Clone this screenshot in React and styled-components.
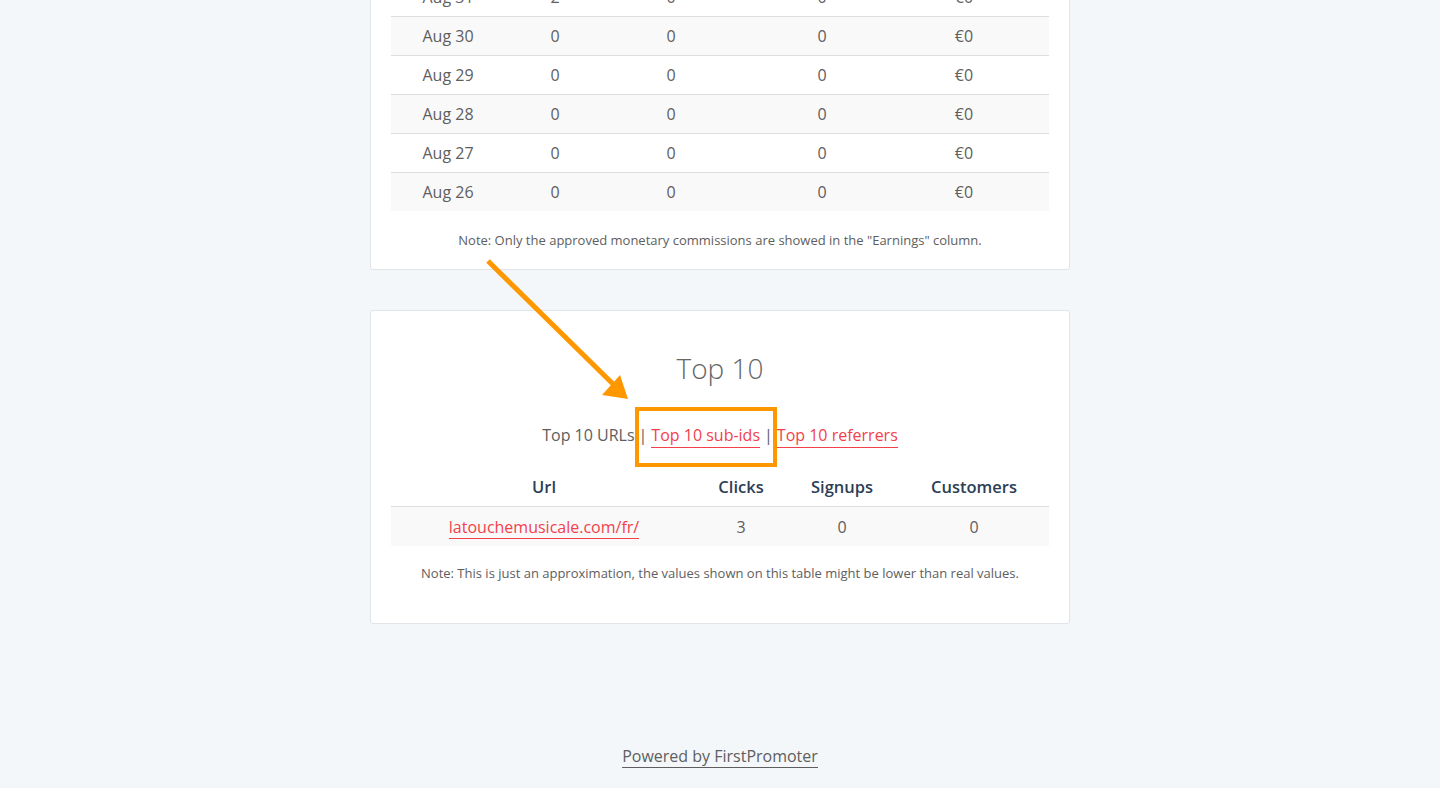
import React from "react";
import styled, { createGlobalStyle } from "styled-components";

const stats = [
  { date: "Aug 31", clicks: 2, signups: 0, customers: 0, earnings: "€0" },
  { date: "Aug 30", clicks: 0, signups: 0, customers: 0, earnings: "€0" },
  { date: "Aug 29", clicks: 0, signups: 0, customers: 0, earnings: "€0" },
  { date: "Aug 28", clicks: 0, signups: 0, customers: 0, earnings: "€0" },
  { date: "Aug 27", clicks: 0, signups: 0, customers: 0, earnings: "€0" },
  { date: "Aug 26", clicks: 0, signups: 0, customers: 0, earnings: "€0" },
];

const topUrls = [
  { url: "latouchemusicale.com/fr/", clicks: 3, signups: 0, customers: 0 },
];

const App = () => {
  return (
    <Page>
      <GlobalStyle />
      <Column>
        {/* page is scrolled, so the stats card starts above the viewport */}
        <Card $offset="-44px" $bottom="20px">
          <StatsTable>
            {stats.map((row, i) => (
              <StatsRow key={row.date} $striped={i % 2 === 1}>
                <Cell>{row.date}</Cell>
                <Cell>{row.clicks}</Cell>
                <Cell>{row.signups}</Cell>
                <Cell>{row.customers}</Cell>
                <Cell>{row.earnings}</Cell>
              </StatsRow>
            ))}
          </StatsTable>
          <Note $top="20px">
            Note: Only the approved monetary commissions are showed in the
            "Earnings" column.
          </Note>
        </Card>

        <Card $offset="40px" $bottom="41px">
          <Title>Top 10</Title>
          <Tabs>
            <span>Top 10 URLs</span>
            <Sep>|</Sep>
            <TabLink href="#">Top 10 sub-ids</TabLink>
            <Sep>|</Sep>
            <TabLink href="#">Top 10 referrers</TabLink>
          </Tabs>
          <TopTable>
            <TopRow $head>
              <HeadCell>Url</HeadCell>
              <HeadCell>Clicks</HeadCell>
              <HeadCell>Signups</HeadCell>
              <HeadCell>Customers</HeadCell>
            </TopRow>
            {topUrls.map((row) => (
              <TopRow key={row.url} $striped>
                <Cell>
                  <TabLink href="#">{row.url}</TabLink>
                </Cell>
                <Cell>{row.clicks}</Cell>
                <Cell>{row.signups}</Cell>
                <Cell>{row.customers}</Cell>
              </TopRow>
            ))}
          </TopTable>
          <Note $top="18px">
            Note: This is just an approximation, the values shown on this table
            might be lower than real values.
          </Note>
        </Card>

        <Footer>
          <FooterLink href="#">Powered by FirstPromoter</FooterLink>
        </Footer>
      </Column>

      {/* annotation drawn over the screenshot */}
      <Arrow width="160" height="160" viewBox="0 0 160 160">
        <line x1="2" y1="2" x2="128" y2="126" stroke="#ff9800" strokeWidth="5" />
        <polygon points="142,140 116,136 134,116" fill="#ff9800" />
      </Arrow>
      <Highlight />
    </Page>
  );
};

export default App;

// CSS styling

const GlobalStyle = createGlobalStyle`
  html, body {
    margin: 0;
    padding: 0;
    background: #f3f7fa;
  }
  body {
    font-family: "Open Sans", "Liberation Sans", sans-serif;
    color: #555;
    overflow: hidden;
  }
`;

const Page = styled.div`
  position: relative;
  width: 1440px;
  height: 788px;
  overflow: hidden;
`;

const Column = styled.div`
  width: 700px;
  margin: 0 auto;
  display: flex;
  flex-direction: column;
`;

const Card = styled.div`
  margin-top: ${(p) => p.$offset};
  background: #fff;
  border: 1px solid #e1e5e9;
  border-radius: 3px;
  padding: 20px 20px ${(p) => p.$bottom};
  box-sizing: border-box;
  display: flex;
  flex-direction: column;
`;

const StatsTable = styled.div`
  display: flex;
  flex-direction: column;
`;

const StatsRow = styled.div`
  display: grid;
  grid-template-columns: 114px 100px 132px 170px 114px 1fr;
  height: 39px;
  align-items: center;
  border-top: 1px solid #ddd;
  box-sizing: border-box;
  background: ${(p) => (p.$striped ? "#f9f9f9" : "#fff")};
`;

const Cell = styled.div`
  text-align: center;
  font-size: 16px;
  color: #5e5e5e;
`;

const HeadCell = styled(Cell)`
  font-weight: 600;
  color: #2c3e55;
  font-size: 16.5px;
`;

const Note = styled.p`
  margin: ${(p) => p.$top} 0 0;
  text-align: center;
  font-size: 13px;
  line-height: 18px;
  color: #5e5e5e;
`;

const Title = styled.h2`
  margin: 20px 0 0;
  text-align: center;
  font-size: 28px;
  font-weight: 300;
  line-height: 34px;
  color: #666;
`;

const Tabs = styled.div`
  margin-top: 38px;
  display: flex;
  justify-content: center;
  align-items: baseline;
  font-size: 16px;
  line-height: 24px;
  color: #5e5e5e;
`;

const Sep = styled.span`
  margin: 0 4px;
  color: #5e5e5e;
`;

const TabLink = styled.a`
  color: #f2414b;
  text-decoration: none;
  border-bottom: 1px solid #f2414b;
`;

const TopTable = styled.div`
  margin-top: 19px;
  display: flex;
  flex-direction: column;
`;

const TopRow = styled.div`
  display: grid;
  grid-template-columns: 306px 88px 114px 150px;
  height: ${(p) => (p.$head ? "40px" : "39px")};
  align-items: center;
  box-sizing: border-box;
  border-bottom: ${(p) => (p.$head ? "1px solid #ddd" : "none")};
  background: ${(p) => (p.$striped ? "#f9f9f9" : "#fff")};
`;

const Footer = styled.div`
  margin-top: 120px;
  text-align: center;
  font-size: 16px;
  line-height: 24px;
`;

const FooterLink = styled.a`
  color: #5e5e5e;
  text-decoration: none;
  border-bottom: 1px solid #5e5e5e;
`;

const Arrow = styled.svg`
  position: absolute;
  left: 486px;
  top: 259px;
  overflow: visible;
`;

const Highlight = styled.div`
  position: absolute;
  left: 635px;
  top: 407px;
  width: 142px;
  height: 60px;
  box-sizing: border-box;
  border: 4px solid #ff9800;
`;
